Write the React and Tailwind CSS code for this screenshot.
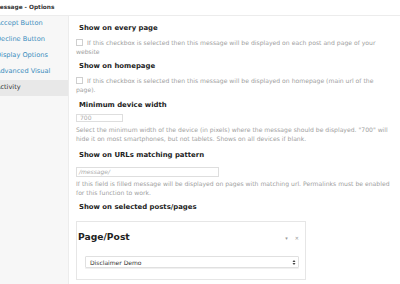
import React from 'react';

const menu = ['Accept Button', 'Decline Button', 'Display Options', 'Advanced Visual', 'Activity'];

const Heading = ({ children, className = '' }) => (
  <div className={`text-[6.9px] font-bold text-[#222] h-[9px] leading-[9px] ml-[3px] ${className}`}>{children}</div>
);

const Help = ({ children, className = '' }) => (
  <p className={`text-[6.1px] leading-[9px] text-[#a0a0a0] ${className}`}>{children}</p>
);

const Checkbox = () => (
  <span className="inline-block w-[7px] h-[7px] border border-[#cfcfcf] bg-white mr-[4px] align-[-1px]" />
);

export default function App() {
  return (
    <div className="w-[400px] h-[284px] overflow-hidden bg-white" style={{ fontFamily: '"DejaVu Sans", Verdana, sans-serif' }}>
      <div className="h-[16px] border-b border-[#ececec] flex items-center">
        <span className="-ml-[6px] text-[5.8px] font-semibold text-[#333]">Message - Options</span>
      </div>
      <div className="flex h-[268px]">
        <div className="w-[69px] shrink-0 bg-[#f7f7f7] border-r border-[#ececec]">
          {menu.map((m) => (
            <div
              key={m}
              className={`h-[16px] flex items-center text-[6.6px] overflow-hidden whitespace-nowrap ${
                m === 'Activity' ? 'bg-[#e8e8e8] text-[#333]' : 'text-[#3b8dbd]'
              }`}
            >
              <span className="-ml-[4px]">{m}</span>
            </div>
          ))}
        </div>
        <div className="flex-1 pl-[7px] pr-[10px] pt-[8px]">
          <Heading>Show on every page</Heading>
          <Help className="mt-[5px]">
            <Checkbox />
            If this checkbox is selected then this message will be displayed on each post and page of your website
          </Help>
          <Heading className="mt-[6px]">Show on homepage</Heading>
          <Help className="mt-[5px]">
            <Checkbox />
            If this checkbox is selected then this message will be displayed on homepage (main url of the page).
          </Help>
          <Heading className="mt-[7px]">Minimum device width</Heading>
          <div className="mt-[4px] w-[47px] h-[8px] border border-[#dedede] text-[6px] leading-[6px] text-[#aaa] pl-[3px]">700</div>
          <Help className="mt-[3px]">
            Select the minimum width of the device (in pixels) where the message should be displayed. "700" will hide it on most smartphones, but not tablets. Shows on all devices if blank.
          </Help>
          <Heading className="mt-[8px]">Show on URLs matching pattern</Heading>
          <div className="mt-[7px] w-[143px] h-[10px] border border-[#dedede] text-[6px] leading-[8px] text-[#aaa] pl-[2px] italic">/message/</div>
          <Help className="mt-[2px]">
            If this field is filled message will be displayed on pages with matching url. Permalinks must be enabled for this function to work.
          </Help>
          <Heading className="mt-[6px]">Show on selected posts/pages</Heading>
          <div className="mt-[9px] w-[230px] h-[59px] border border-[#e6e6e6] pl-[1px] pr-[6px] pt-[8px]">
            <div className="flex items-center justify-between h-[14px]">
              <span className="text-[9.2px] font-bold text-[#222]">Page/Post</span>
              <span className="flex items-center gap-[7px] text-[5px] text-[#999] mt-[4px]">
                <span>▾</span>
                <span>✕</span>
              </span>
            </div>
            <div className="mt-[12px] ml-[7px] h-[12px] border border-[#e0e0e0] rounded-[1px] flex items-center justify-between pl-[4px] pr-[2px] shadow-[0_1px_0_#f0f0f0]">
              <span className="text-[6px] text-[#333]">Disclaimer Demo</span>
              <svg width="4" height="7" viewBox="0 0 4 7">
                <path d="M0.5 3 L2 1 L3.5 3 Z M0.5 4 L2 6 L3.5 4 Z" fill="#444" />
              </svg>
            </div>
          </div>
        </div>
      </div>
    </div>
  );
}
